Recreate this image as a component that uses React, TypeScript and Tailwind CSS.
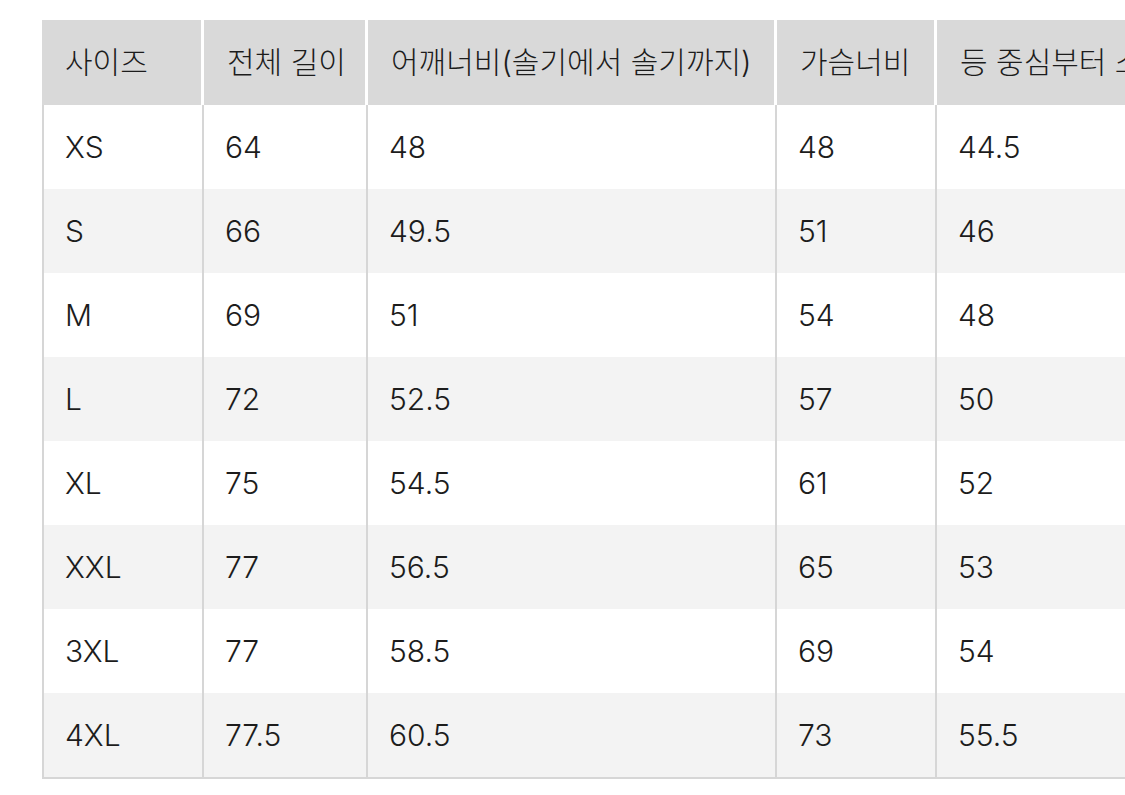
const headers = ["사이즈", "전체 길이", "어깨너비(솔기에서 솔기까지)", "가슴너비", "등 중심부터 소매 끝까지"];

const rows = [
  ["XS", "64", "48", "48", "44.5"],
  ["S", "66", "49.5", "51", "46"],
  ["M", "69", "51", "54", "48"],
  ["L", "72", "52.5", "57", "50"],
  ["XL", "75", "54.5", "61", "52"],
  ["XXL", "77", "56.5", "65", "53"],
  ["3XL", "77", "58.5", "69", "54"],
  ["4XL", "77.5", "60.5", "73", "55.5"],
];

const widths = ["w-[162px]", "w-[164px]", "w-[409px]", "w-[160px]", "w-[400px]"];

export default function App() {
  return (
    <div
      className="w-[1125px] h-[795px] overflow-hidden bg-white pl-[42px] pt-[20px] text-[#1c1c1c] font-light"
      style={{ fontFamily: 'Inter, "Noto Sans CJK KR", sans-serif' }}
    >
      <div className="w-[1295px]">
        <div className="flex h-[85px] bg-[#d9d9d9]">
          {headers.map((h, i) => (
            <div
              key={h}
              className={`${widths[i]} shrink-0 flex items-center pl-[23px] text-[30px] whitespace-nowrap ${i < 4 ? "border-r-[3px] border-white" : ""}`}
            >
              {h}
            </div>
          ))}
        </div>
        {rows.map((r, ri) => (
          <div
            key={r[0]}
            className={`flex h-[84px] ${ri % 2 === 1 ? "bg-[#f3f3f3]" : "bg-white"} ${ri === rows.length - 1 ? "border-b-2 border-[#d6d6d6] h-[86px]" : ""}`}
          >
            {r.map((c, i) => (
              <div
                key={i}
                className={`${widths[i]} shrink-0 flex items-center text-[30px] ${i === 0 ? "border-l-2 pl-[21px]" : "pl-[21px]"} border-r-2 border-[#d6d6d6]`}
              >
                {c}
              </div>
            ))}
          </div>
        ))}
      </div>
    </div>
  );
}
